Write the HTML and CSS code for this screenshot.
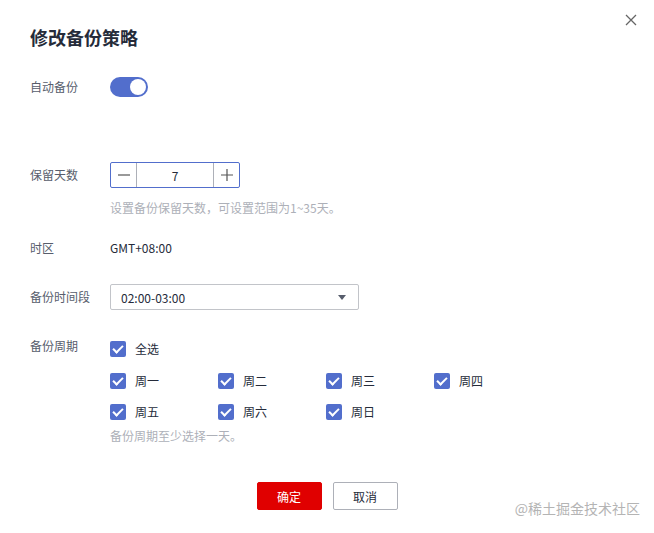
FILE: index.html
```html
<!DOCTYPE html>
<html lang="zh-CN">
<head>
<meta charset="utf-8">
<title>修改备份策略</title>
<link rel="stylesheet" href="styles.css">
</head>
<body>
<div class="dialog">
  <button class="close" aria-label="关闭">
    <svg width="12" height="12" viewBox="0 0 12 12"><path d="M1 1L11 11M11 1L1 11" stroke="#666" stroke-width="1.3" fill="none"/></svg>
  </button>
  <h1 class="title">修改备份策略</h1>

  <div class="row row-auto">
    <span class="label">自动备份</span>
    <span class="switch"><span class="knob"></span></span>
  </div>

  <div class="row row-keep">
    <span class="label">保留天数</span>
    <div class="stepper">
      <span class="step step-minus"><svg width="12" height="12" viewBox="0 0 12 12"><path d="M0 6H12" stroke="#555" stroke-width="1.2"/></svg></span>
      <span class="step-value">7</span>
      <span class="step step-plus"><svg width="12" height="12" viewBox="0 0 12 12"><path d="M0 6H12M6 0V12" stroke="#555" stroke-width="1.2"/></svg></span>
    </div>
  </div>
  <p class="hint hint-keep">设置备份保留天数，可设置范围为1~35天。</p>

  <div class="row row-zone">
    <span class="label">时区</span>
    <span class="value">GMT+08:00</span>
  </div>

  <div class="row row-time">
    <span class="label">备份时间段</span>
    <div class="select">
      <span class="select-text">02:00-03:00</span>
      <svg class="caret" width="8" height="5" viewBox="0 0 8 5"><path d="M0 0H8L4 5Z" fill="#575d6c"/></svg>
    </div>
  </div>

  <div class="row row-cycle">
    <span class="label label-cycle">备份周期</span>
    <div class="cycle">
      <div class="checks">
        <label class="check"><span class="box"></span>全选</label>
      </div>
      <div class="checks checks-week">
        <label class="check"><span class="box"></span>周一</label>
        <label class="check"><span class="box"></span>周二</label>
        <label class="check"><span class="box"></span>周三</label>
        <label class="check"><span class="box"></span>周四</label>
      </div>
      <div class="checks">
        <label class="check"><span class="box"></span>周五</label>
        <label class="check"><span class="box"></span>周六</label>
        <label class="check"><span class="box"></span>周日</label>
      </div>
      <p class="hint hint-cycle">备份周期至少选择一天。</p>
    </div>
  </div>

  <div class="actions">
    <button class="btn btn-primary">确定</button>
    <button class="btn btn-default">取消</button>
  </div>

  <span class="watermark">@稀土掘金技术社区</span>
</div>
</body>
</html>
```
FILE: styles.css
```css
* { box-sizing: border-box; }

html, body {
  margin: 0;
  background: #fff;
}

body {
  font-family: "Noto Sans CJK SC", "Noto Sans", sans-serif;
  font-size: 12px;
  color: #252b3a;
}

.dialog {
  position: relative;
  width: 654px;
  height: 533px;
  padding: 25px 30px 0;
}

.close {
  position: absolute;
  top: 13px;
  right: 16px;
  width: 14px;
  height: 14px;
  padding: 1px;
  border: 0;
  background: none;
  display: flex;
}

.title {
  margin: 0;
  font-size: 18px;
  line-height: 24px;
  font-weight: 700;
  color: #252b3a;
}

.row {
  display: flex;
  align-items: center;
}

.label {
  width: 80px;
  flex: none;
  color: #575d6c;
  line-height: 18px;
}

.value { line-height: 18px; }

.row-auto { margin-top: 28px; height: 20px; }
.row-keep { margin-top: 65px; height: 26px; }
.row-zone { margin-top: 22px; height: 18px; }
.row-time { margin-top: 27px; height: 26px; }
.row-cycle { margin-top: 29px; align-items: flex-start; }

.label-cycle { line-height: 14px; }

/* toggle switch */
.switch {
  width: 38px;
  height: 20px;
  border-radius: 10px;
  background: #526ecc;
  display: flex;
  justify-content: flex-end;
  align-items: center;
  padding: 0 2px;
}
.knob {
  width: 16px;
  height: 16px;
  border-radius: 50%;
  background: #fff;
}

/* number stepper */
.stepper {
  width: 130px;
  height: 26px;
  border: 1px solid #526ecc;
  border-radius: 2px;
  display: flex;
}
.step {
  width: 26px;
  display: flex;
  align-items: center;
  justify-content: center;
}
.step-minus { border-right: 1px solid #adb0b8; }
.step-plus { border-left: 1px solid #adb0b8; }
.step-value {
  flex: 1;
  display: flex;
  align-items: center;
  justify-content: center;
  color: #252b3a;
}

.hint {
  margin: 0;
  color: #adb0b8;
  line-height: 18px;
}
.hint-keep { margin: 11px 0 0 80px; }

/* select */
.select {
  width: 249px;
  height: 26px;
  border: 1px solid #c2c4c9;
  border-radius: 2px;
  display: flex;
  align-items: center;
  justify-content: space-between;
  padding: 0 12px 0 10px;
}

/* week checkboxes */
.cycle {
  display: flex;
  flex-direction: column;
  gap: 11px;
}
.checks-week { margin-top: 1px; }
.cycle .hint-cycle { margin-top: -6px; }
.checks {
  display: flex;
  height: 20px;
}
.check {
  width: 108px;
  display: flex;
  align-items: center;
  gap: 9px;
  line-height: 18px;
  color: #252b3a;
}
.box {
  width: 16px;
  height: 16px;
  border-radius: 2px;
  background: #526ecc;
  position: relative;
  flex: none;
}
.box::after {
  content: "";
  position: absolute;
  left: 5px;
  top: 2px;
  width: 4px;
  height: 8px;
  border: solid #fff;
  border-width: 0 2px 2px 0;
  transform: rotate(45deg);
}

/* footer buttons */
.actions {
  margin-top: 37px;
  display: flex;
  justify-content: center;
  gap: 11px;
}
.btn {
  width: 65px;
  height: 28px;
  border-radius: 2px;
  font-family: inherit;
  font-size: 12px;
  padding: 0;
}
.btn-primary {
  background: #e00000;
  border: 1px solid #e00000;
  color: #fff;
}
.btn-default {
  background: #fff;
  border: 1px solid #adb0b8;
  color: #252b3a;
}

.watermark {
  position: absolute;
  right: 14px;
  bottom: 15px;
  font-size: 14px;
  line-height: 20px;
  color: #b4b4b4;
}
```
